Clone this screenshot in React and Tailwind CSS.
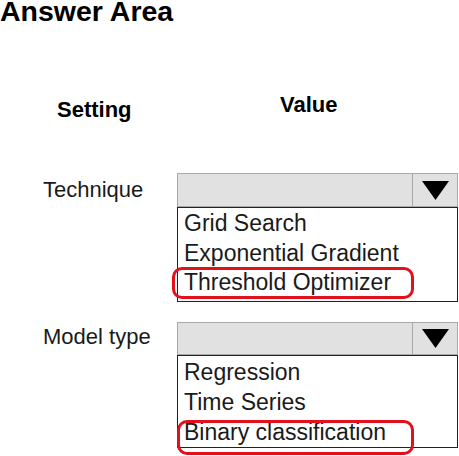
import React from "react";

const Arrow = () => (
  <svg width="27" height="19" viewBox="0 0 27 19">
    <polygon points="0,0 27,0 13.5,19" fill="#000" />
  </svg>
);

// Dropdown with its options listed open below it
const Dropdown = ({ headerH, items, lineH, pb, picked, ring }) => (
  <div className="w-[281px]">
    <div
      className="flex bg-[#e1e1e1] border border-[#a9a9a9]"
      style={{ height: headerH }}
    >
      <div className="flex-1" />
      <div className="w-[45px] border-l border-[#a9a9a9] flex items-center justify-center">
        <Arrow />
      </div>
    </div>
    <div className="border border-[#222] pt-[1px]" style={{ paddingBottom: pb }}>
      {items.map((item) => (
        <div
          key={item}
          className="relative pl-[6px] text-[23px] text-[#1a1a1a]"
          style={{ lineHeight: lineH }}
        >
          {item}
          {item === picked && (
            <span
              className="absolute border-[3px] border-[#e3101b] rounded-[10px] pointer-events-none"
              style={ring}
            />
          )}
        </div>
      ))}
    </div>
  </div>
);

export default function App() {
  return (
    <div className="w-[459px] h-[456px] overflow-hidden bg-white font-['Liberation_Sans',Arial,sans-serif] text-black">
      {/* Title */}
      <h1 className="-mt-[3px] h-[27px] text-[28.5px] leading-[28px] font-bold">Answer Area</h1>

      {/* Column headers */}
      <div className="mt-[70px] h-[27px] flex items-start text-[22px] leading-[22px] font-bold">
        <span className="mt-[5px] pl-[57px] w-[280px]">Setting</span>
        <span>Value</span>
      </div>

      {/* Technique */}
      <div className="mt-[52px] flex">
        <div className="w-[177px] pl-[43px] text-[22px] leading-[33px] text-[#1a1a1a]">Technique</div>
        <Dropdown
          headerH={34}
          items={["Grid Search", "Exponential Gradient", "Threshold Optimizer"]}
          lineH="29.5px"
          pb={3}
          picked="Threshold Optimizer"
          ring={{ left: -6, right: 43, top: -1, bottom: -1 }}
        />
      </div>

      {/* Model type */}
      <div className="mt-[20px] flex">
        <div className="w-[177px] pl-[43px] text-[22px] leading-[29px] text-[#1a1a1a]">Model type</div>
        <Dropdown
          headerH={33}
          items={["Regression", "Time Series", "Binary classification"]}
          lineH="30px"
          pb={0}
          picked="Binary classification"
          ring={{ left: -1, right: 43, top: 3, bottom: -8 }}
        />
      </div>
    </div>
  );
}
